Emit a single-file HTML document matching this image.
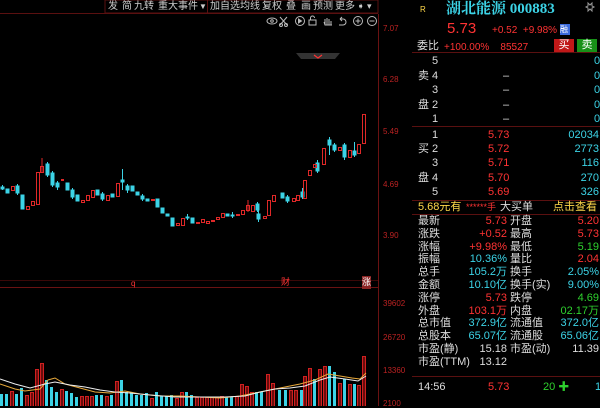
<!DOCTYPE html>
<html><head><meta charset="utf-8"><style>
*{margin:0;padding:0;box-sizing:border-box}
body{width:600px;height:406px;background:#000;overflow:hidden;position:relative;font-family:"Liberation Sans","Noto Sans CJK SC",sans-serif;font-size:11px;color:#ddd}
.a{position:absolute;white-space:nowrap;line-height:13px}
.t{position:absolute;white-space:nowrap;top:1px;font-size:10px;line-height:11px;color:#ccc}
.r{color:#f33}.c{color:#3cd3e6}.g{color:#2ed12e}.w{color:#ddd}.y{color:#ffd84a}
.ax{position:absolute;left:383px;font-size:8px;color:#b22;line-height:9px}
</style></head><body>
<svg width="600" height="406" style="position:absolute;left:0;top:0">
<line x1="0" y1="13.5" x2="378" y2="13.5" stroke="#5a1010"/>
<rect x="105" y="0" width="273" height="13" fill="none" stroke="#5a1010"/>
<line x1="207.5" y1="0" x2="207.5" y2="13" stroke="#5a1010"/>
<line x1="378.5" y1="14" x2="378.5" y2="406" stroke="#6a1212"/>
<line x1="0" y1="287.5" x2="378" y2="287.5" stroke="#6a1212"/>
<line x1="0" y1="280.5" x2="378" y2="280.5" stroke="#3a0808"/>
<line x1="412" y1="52.5" x2="600" y2="52.5" stroke="#5a1010"/>
<line x1="412" y1="126.5" x2="600" y2="126.5" stroke="#5a1010"/>
<line x1="412" y1="200.5" x2="600" y2="200.5" stroke="#5a1010"/>
<line x1="412" y1="214.5" x2="600" y2="214.5" stroke="#5a1010"/>
<line x1="412" y1="376.5" x2="600" y2="376.5" stroke="#5a1010"/>
<path d="M296 53h44l-5 6h-34z" fill="#333"/><path d="M314 55l4 3 4-3" stroke="#f33" fill="none" stroke-width="1.2"/>
<g stroke="#bbb" fill="none" stroke-width="1">
<ellipse cx="272" cy="21" rx="5" ry="3"/><circle cx="272" cy="21" r="1.3"/>
<path d="M280 17l7 8M287 17l-7 8"/><circle cx="281" cy="25" r="1.5"/><circle cx="286" cy="25" r="1.5"/>
<circle cx="300" cy="21" r="4.5"/><path d="M298.5 19v4l3-2z" fill="#bbb"/>
<rect x="309" y="20" width="7" height="5"/><path d="M310.5 20v-2a2 2 0 0 1 4 0"/>
<path d="M325 25v-6M327 25v-7M329 25v-6M331 25v-4M324 22l1 3h7"/>
<path d="M340 19h3a3 3 0 0 1 0 6h-4M340 19l2-2M340 19l2 2"/>
<circle cx="358" cy="21" r="4.5"/><path d="M355.5 21h5M358 18.5v5"/>
<circle cx="372" cy="21" r="4.5"/><path d="M369.5 21h5"/>
</g>
<path d="M588 3l2 2 2-2v3l2 1-2 1v3l-2-2-2 2v-3l-2-1 2-1z" fill="none" stroke="#999"/>
<g fill="#3cd3e6" stroke="#3cd3e6">
<line x1="2.5" y1="185" x2="2.5" y2="190"/><rect x="1" y="187" width="3" height="2"/>
<rect x="6" y="189" width="3" height="4"/>
<line x1="17.5" y1="184" x2="17.5" y2="195"/><rect x="16" y="186" width="3" height="7"/>
<rect x="21" y="195" width="3" height="14"/>
<line x1="47.5" y1="162" x2="47.5" y2="177"/><rect x="46" y="164" width="3" height="11"/>
<line x1="52.5" y1="171" x2="52.5" y2="187"/><rect x="51" y="173" width="3" height="12"/>
<line x1="57.5" y1="181" x2="57.5" y2="190"/><rect x="56" y="183" width="3" height="4"/>
<rect x="66" y="183" width="3" height="7"/>
<line x1="72.5" y1="188" x2="72.5" y2="199"/><rect x="71" y="190" width="3" height="7"/>
<rect x="76" y="195" width="3" height="6"/>
<rect x="96" y="190" width="3" height="5"/>
<line x1="102.5" y1="192" x2="102.5" y2="201"/><rect x="101" y="194" width="3" height="5"/>
<rect x="111" y="194" width="3" height="3"/>
<line x1="122.5" y1="169" x2="122.5" y2="190"/><rect x="121" y="180" width="3" height="2"/>
<line x1="127.5" y1="184" x2="127.5" y2="193"/><rect x="126" y="186" width="3" height="4"/>
<rect x="131" y="186" width="3" height="5"/>
<rect x="136" y="192" width="3" height="3"/>
<line x1="142.5" y1="194" x2="142.5" y2="201"/><rect x="141" y="196" width="3" height="3"/>
<rect x="146" y="199" width="3" height="2"/>
<rect x="156" y="199" width="3" height="8"/>
<rect x="161" y="208" width="3" height="5"/>
<rect x="166" y="214" width="3" height="2"/>
<rect x="171" y="218" width="3" height="8"/>
<line x1="187.5" y1="214" x2="187.5" y2="220"/><rect x="186" y="217" width="3" height="1"/>
<rect x="191" y="218" width="3" height="5"/>
<rect x="226" y="214" width="3" height="2"/>
<line x1="232.5" y1="212" x2="232.5" y2="218"/><rect x="231" y="215" width="3" height="1"/>
<line x1="257.5" y1="202" x2="257.5" y2="212"/><rect x="256" y="204" width="3" height="6"/>
<line x1="258.5" y1="210" x2="258.5" y2="222"/><rect x="257" y="214" width="3" height="5"/>
<rect x="281" y="193" width="3" height="5"/>
<line x1="287.5" y1="195" x2="287.5" y2="203"/><rect x="286" y="197" width="3" height="4"/>
<line x1="302.5" y1="188" x2="302.5" y2="199"/><rect x="301" y="192" width="3" height="5"/>
<line x1="317.5" y1="160" x2="317.5" y2="173"/><rect x="316" y="163" width="3" height="8"/>
<line x1="329.5" y1="137" x2="329.5" y2="155"/><rect x="328" y="140" width="3" height="5"/>
<line x1="334.5" y1="143" x2="334.5" y2="152"/><rect x="333" y="145" width="3" height="5"/>
<line x1="344.5" y1="143" x2="344.5" y2="160"/><rect x="343" y="145" width="3" height="12"/>
<line x1="354.5" y1="142" x2="354.5" y2="157"/><rect x="353" y="151" width="3" height="4"/>
</g>
<g fill="none" stroke="#e02828">
<rect x="11.5" y="186.5" width="3" height="4"/><rect x="26.5" y="206.5" width="3" height="3"/><rect x="31.5" y="201.5" width="3" height="4"/>
<rect x="36.5" y="172.5" width="3" height="32"/><line x1="42" y1="158" x2="42" y2="172"/><rect x="40.5" y="166.5" width="3" height="6"/>
<rect x="61.5" y="179.5" width="2" height="1"/><rect x="81.5" y="200.5" width="3" height="2"/><rect x="86.5" y="195.5" width="3" height="5"/>
<rect x="91.5" y="190.5" width="3" height="7"/><rect x="106.5" y="195.5" width="3" height="5"/><rect x="116.5" y="183.5" width="3" height="13"/>
<rect x="151.5" y="199.5" width="3" height="1"/><rect x="176.5" y="223.5" width="3" height="2"/><rect x="181.5" y="218.5" width="3" height="7"/>
<rect x="196.5" y="222.5" width="3" height="1"/><rect x="201.5" y="219.5" width="3" height="3"/><rect x="206.5" y="221.5" width="3" height="2"/>
<rect x="211.5" y="220.5" width="3" height="1"/><rect x="216.5" y="217.5" width="3" height="2"/><rect x="221.5" y="213.5" width="3" height="4"/>
<rect x="236.5" y="214.5" width="3" height="1"/><rect x="241.5" y="210.5" width="3" height="4"/><line x1="248" y1="200" x2="248" y2="212"/><rect x="246.5" y="205.5" width="3" height="5"/>
<rect x="251.5" y="205.5" width="3" height="6"/><rect x="263.5" y="216.5" width="3" height="2"/><rect x="267.5" y="200.5" width="3" height="15"/>
<rect x="272.5" y="195.5" width="3" height="6"/><rect x="292.5" y="198.5" width="3" height="3"/><rect x="296.5" y="195.5" width="3" height="5"/>
<rect x="303.5" y="180.5" width="3" height="18"/><rect x="308.5" y="170.5" width="3" height="5"/><rect x="313.5" y="164.5" width="3" height="3"/>
<rect x="322.5" y="148.5" width="3" height="16"/><rect x="338.5" y="147.5" width="3" height="3"/><rect x="348.5" y="150.5" width="3" height="7"/>
<rect x="357.5" y="144.5" width="3" height="9"/><rect x="362.5" y="114.5" width="3" height="29"/>
</g>
<g fill="#3cd3e6">
<rect x="0" y="394" width="3" height="12"/><rect x="5" y="394" width="3" height="12"/><rect x="15" y="394" width="3" height="12"/><rect x="20" y="388" width="3" height="18"/>
<rect x="45" y="380" width="3" height="26"/><rect x="50" y="387" width="3" height="19"/><rect x="55" y="392" width="3" height="14"/><rect x="65" y="391" width="3" height="15"/>
<rect x="70" y="393" width="3" height="13"/><rect x="75" y="397" width="3" height="9"/><rect x="95" y="395" width="3" height="11"/><rect x="100" y="395" width="3" height="11"/>
<rect x="110" y="395" width="3" height="11"/><rect x="120" y="380" width="3" height="26"/><rect x="125" y="392" width="3" height="14"/><rect x="130" y="392" width="3" height="14"/>
<rect x="135" y="395" width="3" height="11"/><rect x="140" y="395" width="3" height="11"/><rect x="145" y="393" width="3" height="13"/><rect x="155" y="392" width="3" height="14"/>
<rect x="160" y="396" width="3" height="10"/><rect x="165" y="396" width="3" height="10"/><rect x="170" y="395" width="3" height="11"/><rect x="185" y="392" width="3" height="14"/>
<rect x="190" y="395" width="3" height="11"/><rect x="225" y="397" width="3" height="9"/><rect x="230" y="397" width="3" height="9"/><rect x="255" y="392" width="3" height="14"/>
<rect x="260" y="392" width="3" height="14"/><rect x="278" y="390" width="3" height="16"/><rect x="284" y="390" width="3" height="16"/><rect x="300" y="390" width="3" height="16"/>
<rect x="313" y="379" width="3" height="27"/><rect x="328" y="366" width="3" height="40"/><rect x="333" y="372" width="3" height="34"/><rect x="343" y="379" width="3" height="27"/><rect x="353" y="384" width="3" height="22"/>
</g>
<g fill="#6a0c0c" stroke="#d02020">
<rect x="10.5" y="391.5" width="3" height="15"/><rect x="25.5" y="395.5" width="3" height="11"/><rect x="30.5" y="392.5" width="3" height="14"/>
<rect x="35.5" y="369.5" width="3" height="37"/><rect x="40.5" y="363.5" width="3" height="43"/><rect x="60.5" y="389.5" width="3" height="17"/>
<rect x="80.5" y="396.5" width="3" height="10"/><rect x="85.5" y="396.5" width="3" height="10"/><rect x="90.5" y="396.5" width="3" height="10"/>
<rect x="105.5" y="396.5" width="3" height="10"/><rect x="115.5" y="381.5" width="3" height="25"/><rect x="150.5" y="398.5" width="3" height="8"/>
<rect x="175.5" y="398.5" width="3" height="8"/><rect x="180.5" y="392.5" width="3" height="14"/><rect x="195.5" y="397.5" width="3" height="9"/>
<rect x="200.5" y="397.5" width="3" height="9"/><rect x="205.5" y="397.5" width="3" height="9"/><rect x="210.5" y="397.5" width="3" height="9"/>
<rect x="215.5" y="397.5" width="3" height="9"/><rect x="220.5" y="396.5" width="3" height="10"/><rect x="235.5" y="396.5" width="3" height="10"/>
<rect x="240.5" y="384.5" width="3" height="22"/><rect x="245.5" y="386.5" width="3" height="20"/><rect x="250.5" y="392.5" width="3" height="14"/>
<rect x="266.5" y="374.5" width="3" height="32"/><rect x="271.5" y="383.5" width="3" height="23"/><rect x="289.5" y="390.5" width="3" height="16"/>
<rect x="294.5" y="390.5" width="3" height="16"/><rect x="303.5" y="376.5" width="3" height="30"/><rect x="308.5" y="368.5" width="3" height="38"/>
<rect x="318.5" y="369.5" width="3" height="37"/><rect x="323.5" y="366.5" width="3" height="40"/><rect x="338.5" y="383.5" width="3" height="23"/>
<rect x="348.5" y="384.5" width="3" height="22"/><rect x="357.5" y="385.5" width="3" height="21"/><rect x="362.5" y="356.5" width="3" height="50"/>
</g>
<polyline fill="none" stroke="#e8a93a" stroke-width="1" points="0,384 15,389 25,391 40,389 48,380 55,378 65,384 80,388 95,392 110,393 125,391 140,394 160,396 180,396 200,397 220,398 240,396 255,393 270,390 285,387 300,384 315,380 328,374 340,376 352,378 360,379 366,373"/>
<polyline fill="none" stroke="#eee" stroke-width="1" points="0,379 15,384 30,388 45,384 55,382 70,385 85,387 100,390 115,392 130,393 150,395 175,397 200,397 225,397 245,396 260,392 275,389 290,388 305,386 320,380 330,377 345,379 358,381 366,376"/>
</svg>
<div class="t" style="left:108px">发</div><div class="t" style="left:122px">简</div><div class="t" style="left:134px">九转</div><div class="t" style="left:158px">重大事件</div><div class="t" style="left:199px;font-size:8px">▼</div>
<div class="t" style="left:210px">加自选</div><div class="t" style="left:240px">均线</div><div class="t" style="left:262px">复权</div><div class="t" style="left:286px">叠</div><div class="t" style="left:301px">画</div><div class="t" style="left:313px">预测</div><div class="t" style="left:335px">更多</div><div class="t" style="left:357px;font-size:9px">➧ ▾</div>
<div class="ax" style="top:24px">7.07</div><div class="ax" style="top:75px">6.28</div><div class="ax" style="top:127px">5.49</div>
<div class="ax" style="top:180px">4.69</div><div class="ax" style="top:231px">3.90</div>
<div class="ax" style="top:299px">39602</div><div class="ax" style="top:333px">26720</div><div class="ax" style="top:366px">13360</div><div class="ax" style="top:399px">2100</div>
<div class="a r" style="left:131px;top:277px;font-size:8px">q</div>
<div class="a r" style="left:281px;top:276px;font-size:9px">财</div>
<div class="a" style="left:362px;top:276px;font-size:9px;background:#8a2222;color:#fff">涨</div>
<div class="a y" style="left:420px;top:3px;font-size:8px">R</div>
<div class="a c" style="left:446px;top:1px;font-size:15px;line-height:17px;font-family:'Liberation Serif','Noto Serif CJK SC',serif;font-weight:bold">湖北能源 000883</div>
<div class="a r" style="left:447px;top:20px;font-size:15px;line-height:17px">5.73</div>
<div class="a r" style="left:492px;top:24px;font-size:10px">+0.52&nbsp;&nbsp;+9.98%</div>
<div class="a" style="left:560px;top:24px;width:10px;height:11px;background:#3a6adc;color:#fff;font-size:8px;line-height:11px">融</div>
<div class="a w" style="left:417px;top:40px">委比</div>
<div class="a r" style="left:444px;top:41px;font-size:10px">+100.00%&nbsp;&nbsp;&nbsp;&nbsp;85527</div>
<div class="a" style="left:554px;top:39px;width:20px;height:13px;background:#c01818;color:#fff;text-align:center">买</div>
<div class="a" style="left:577px;top:39px;width:20px;height:13px;background:#189018;color:#fff;text-align:center">卖</div>
<div class="a w" style="left:432px;top:55px">5</div><div class="a w" style="left:418px;top:70px">卖 4</div><div class="a w" style="left:432px;top:84px">3</div><div class="a w" style="left:418px;top:99px">盘 2</div><div class="a w" style="left:432px;top:113px">1</div>
<div class="a w" style="left:503px;top:70px">–</div><div class="a w" style="left:503px;top:84px">–</div><div class="a w" style="left:503px;top:99px">–</div><div class="a w" style="left:503px;top:113px">–</div>
<div class="a c" style="left:594px;top:55px">0</div><div class="a c" style="left:594px;top:70px">0</div><div class="a c" style="left:594px;top:84px">0</div><div class="a c" style="left:594px;top:99px">0</div><div class="a c" style="left:594px;top:113px">0</div>
<div class="a w" style="left:432px;top:129px">1</div><div class="a w" style="left:418px;top:143px">买 2</div><div class="a w" style="left:432px;top:157px">3</div><div class="a w" style="left:418px;top:172px">盘 4</div><div class="a w" style="left:432px;top:186px">5</div>
<div class="a r" style="left:488px;top:129px">5.73</div><div class="a r" style="left:488px;top:143px">5.72</div><div class="a r" style="left:488px;top:157px">5.71</div><div class="a r" style="left:488px;top:172px">5.70</div><div class="a r" style="left:488px;top:186px">5.69</div>
<div class="a c" style="right:1px;top:129px">02034</div><div class="a c" style="right:1px;top:143px">2773</div><div class="a c" style="right:1px;top:157px">116</div><div class="a c" style="right:1px;top:172px">270</div><div class="a c" style="right:1px;top:186px">326</div>
<div class="a y" style="left:418px;top:201px">5.68元有</div><div class="a r" style="left:466px;top:201px;font-size:9px">******手</div>
<div class="a w" style="left:500px;top:201px">大买单</div><div class="a y" style="left:553px;top:201px">点击查看</div>
<div class="a w" style="left:418px;top:215px;line-height:12.8px">最新<br>涨跌<br>涨幅<br>振幅<br>总手<br>金额<br>涨停<br>外盘<br>总市值<br>总股本<br>市盈(静)<br>市盈(TTM)</div>
<div class="a" style="right:93px;top:215px;line-height:12.8px;text-align:right"><span class="r">5.73</span><br><span class="r">+0.52</span><br><span class="r">+9.98%</span><br><span class="c">10.36%</span><br><span class="c">105.2万</span><br><span class="c">10.10亿</span><br><span class="r">5.73</span><br><span class="r">103.1万</span><br><span class="c">372.9亿</span><br><span class="c">65.07亿</span><br><span class="w">15.18</span><br><span class="w">13.12</span></div>
<div class="a w" style="left:510px;top:215px;line-height:12.8px">开盘<br>最高<br>最低<br>量比<br>换手<br>换手(实)<br>跌停<br>内盘<br>流通值<br>流通股<br>市盈(动)</div>
<div class="a" style="right:1px;top:215px;line-height:12.8px;text-align:right"><span class="r">5.20</span><br><span class="r">5.73</span><br><span class="g">5.19</span><br><span class="r">2.04</span><br><span class="c">2.05%</span><br><span class="c">9.00%</span><br><span class="g">4.69</span><br><span class="g">02.17万</span><br><span class="c">372.0亿</span><br><span class="c">65.06亿</span><br><span class="w">11.39</span></div>
<div class="a w" style="left:418px;top:381px">14:56</div><div class="a r" style="left:488px;top:381px">5.73</div>
<div class="a g" style="left:543px;top:381px">20 ✚</div><div class="a c" style="left:595px;top:381px">1</div>
</body></html>
